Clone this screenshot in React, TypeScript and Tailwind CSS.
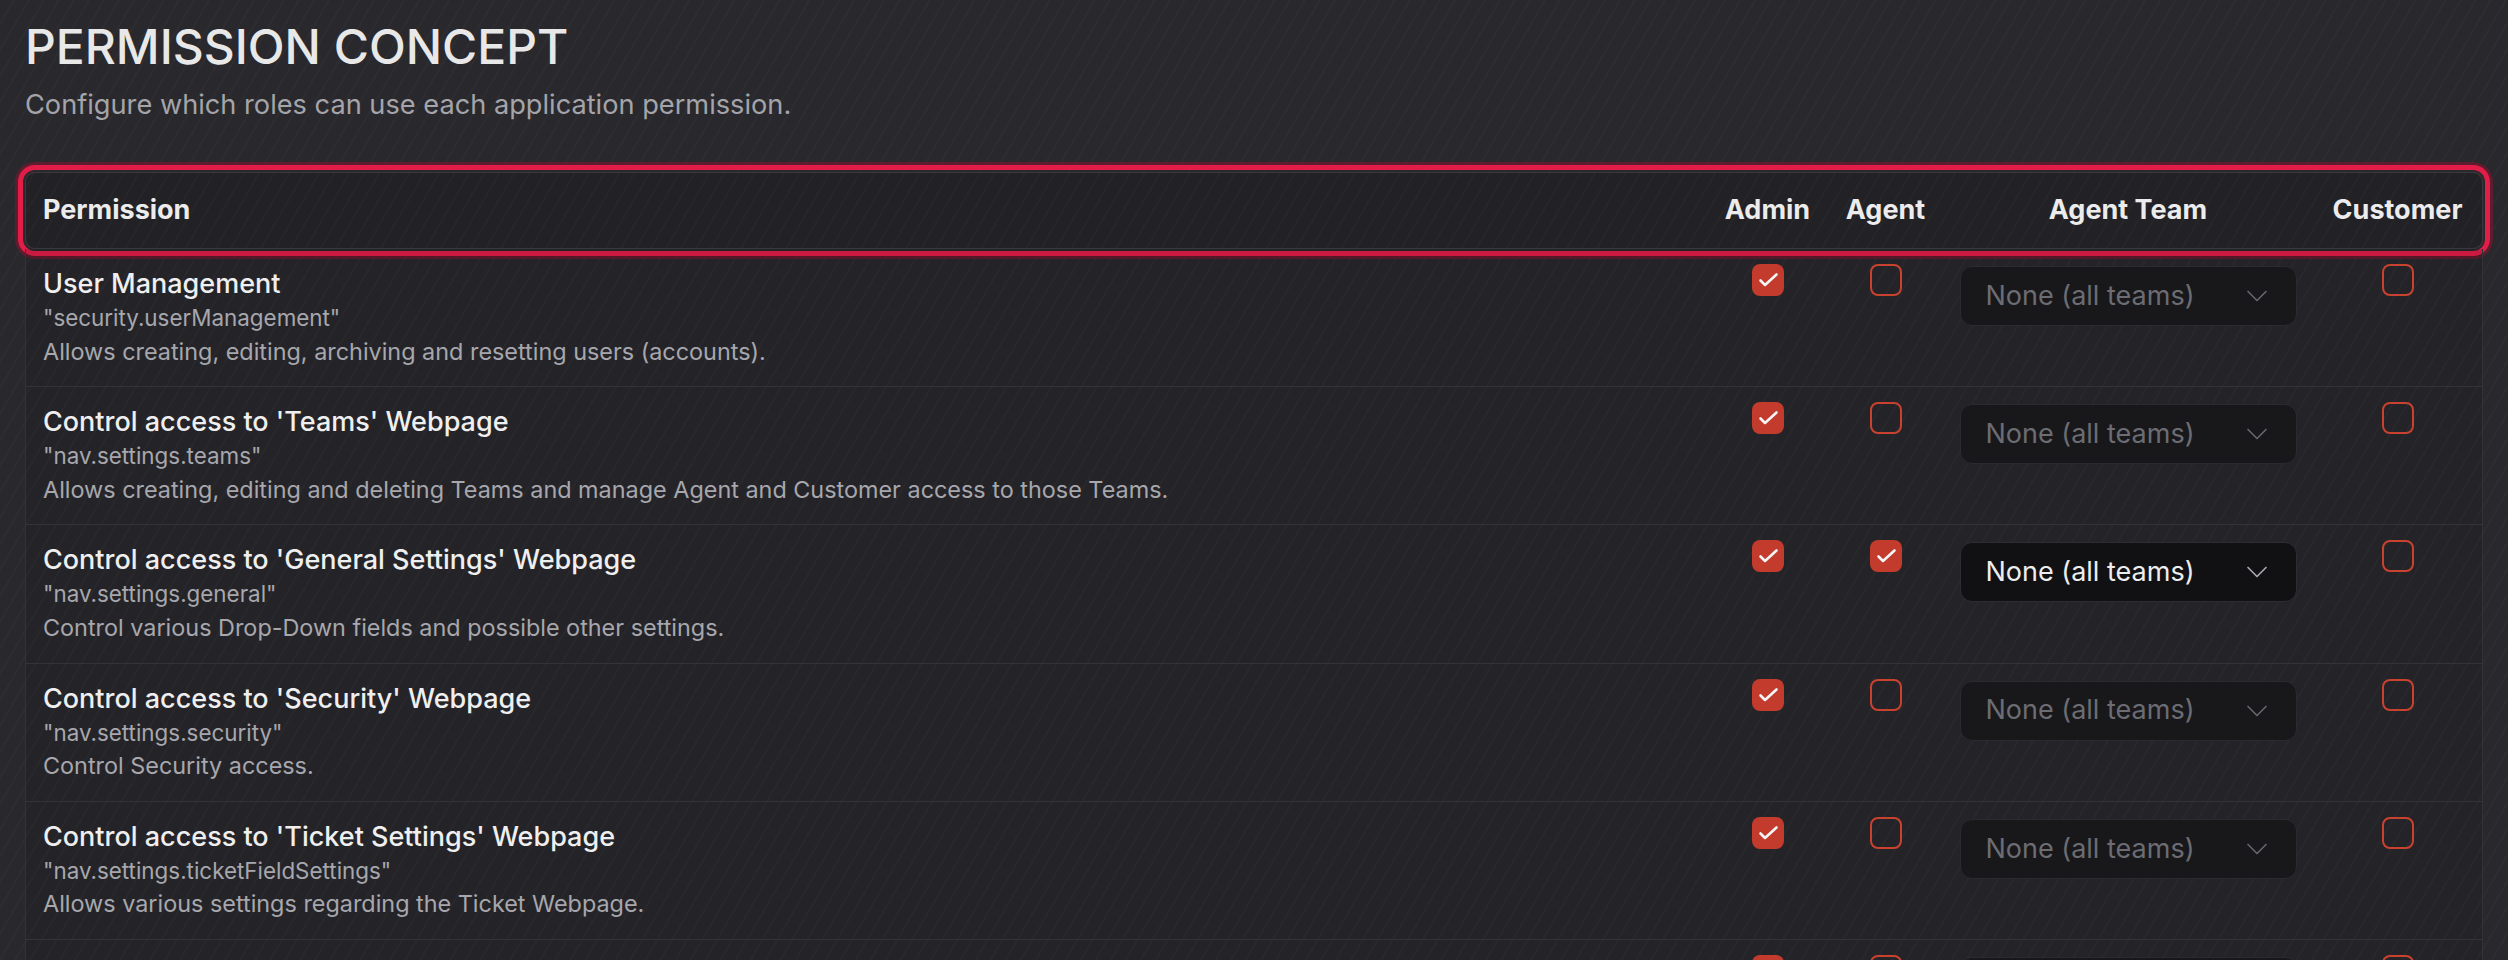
import { ChevronDown } from "lucide-react";

type Permission = {
  title: string;
  key: string;
  description: string;
  admin: boolean;
  agent: boolean;
  customer: boolean;
};

const PERMISSIONS: Permission[] = [
  {
    title: "User Management",
    key: "security.userManagement",
    description: "Allows creating, editing, archiving and resetting users (accounts).",
    admin: true,
    agent: false,
    customer: false,
  },
  {
    title: "Control access to 'Teams' Webpage",
    key: "nav.settings.teams",
    description:
      "Allows creating, editing and deleting Teams and manage Agent and Customer access to those Teams.",
    admin: true,
    agent: false,
    customer: false,
  },
  {
    title: "Control access to 'General Settings' Webpage",
    key: "nav.settings.general",
    description: "Control various Drop-Down fields and possible other settings.",
    admin: true,
    agent: true,
    customer: false,
  },
  {
    title: "Control access to 'Security' Webpage",
    key: "nav.settings.security",
    description: "Control Security access.",
    admin: true,
    agent: false,
    customer: false,
  },
  {
    title: "Control access to 'Ticket Settings' Webpage",
    key: "nav.settings.ticketFieldSettings",
    description: "Allows various settings regarding the Ticket Webpage.",
    admin: true,
    agent: false,
    customer: false,
  },
  {
    title: "Control access to 'Tickets' Webpage",
    key: "nav.tickets",
    description: "Allows viewing and working on Tickets.",
    admin: true,
    agent: false,
    customer: false,
  },
];

// shared column template for header + rows
const COLS = "grid grid-cols-[1fr_121px_115px_370px_169px]";

function RoleCheckbox({ checked }: { checked: boolean }) {
  if (!checked) {
    return <span className="-mt-[3px] block h-8 w-8 rounded-lg border-2 border-[#c9412f]" />;
  }
  return (
    <span className="-mt-[3px] flex h-8 w-8 items-center justify-center rounded-lg bg-[#c23b2c]">
      <svg width="32" height="32" viewBox="0 0 32 32" fill="none">
        <path
          d="M8.5 16.5l4.5 4.5L24.5 10.5"
          stroke="#f5f5f5"
          strokeWidth="2.6"
          strokeLinecap="round"
          strokeLinejoin="round"
        />
      </svg>
    </span>
  );
}

function TeamSelect({ enabled }: { enabled: boolean }) {
  return (
    <div
      className={
        enabled
          ? "-mt-px flex h-[60px] w-[337px] items-center justify-between rounded-xl border border-[#2d2d32] bg-[#111114] pl-[25px] pr-[21px] text-[27px] text-[#ededee]"
          : "-mt-px flex h-[60px] w-[337px] items-center justify-between rounded-xl border border-[#2a2a2f] bg-[#18181b] pl-[25px] pr-[21px] text-[27px] text-[#6c6c73]"
      }
    >
      <span>None (all teams)</span>
      <ChevronDown
        size={36}
        strokeWidth={1.1}
        className={enabled ? "text-[#a9a9b0]" : "text-[#66666e]"}
      />
    </div>
  );
}

export default function App() {
  return (
    <div className="h-screen overflow-hidden bg-[#29292d] bg-[image:repeating-linear-gradient(120deg,transparent_0px,transparent_11px,rgba(255,255,255,0.02)_11px,rgba(255,255,255,0.02)_13px)] px-[25px] pt-[18px] font-['Inter','Noto_Sans',sans-serif]">
      <h1 className="text-[48px] font-medium leading-[58px] text-[#e8e8e9]">PERMISSION CONCEPT</h1>
      <p className="mt-[10px] text-[27.2px] leading-[38px] text-[#a4a4aa]">
        Configure which roles can use each application permission.
      </p>

      <div className="mt-[48px]">
        {/* header row, highlighted with a red ring */}
        <div
          className={`${COLS} h-[77px] items-center rounded-[10px] border border-[#38383e] bg-black/15 text-[27px] font-bold text-[#ececed] shadow-[0_0_0_2px_#29292d,0_0_0_7px_#e11d48,0_0_0_10px_#5c1d2e]`}
        >
          <div className="pl-[17px]">Permission</div>
          <div className="text-center">Admin</div>
          <div className="text-center">Agent</div>
          <div className="text-center">Agent Team</div>
          <div className="text-center">Customer</div>
        </div>

        <div className="border-x border-[#323237] bg-black/10">
          {PERMISSIONS.map((p, i) => (
            <div
              key={p.key}
              className={`${COLS} pb-[18px] pt-[18px] ${i > 0 ? "border-t border-[#333338]" : ""}`}
            >
              <div className="pl-[17px]">
                <div className="text-[27px] font-medium leading-[34px] text-[#efeff0]">{p.title}</div>
                <div className="text-[22.4px] leading-[33.6px] text-[#a7a7ad]">"{p.key}"</div>
                <div className="text-[23.4px] leading-[33.6px] text-[#a7a7ad]">{p.description}</div>
              </div>
              <div className="flex justify-center">
                <RoleCheckbox checked={p.admin} />
              </div>
              <div className="flex justify-center">
                <RoleCheckbox checked={p.agent} />
              </div>
              <div className="flex justify-center">
                <TeamSelect enabled={p.agent} />
              </div>
              <div className="flex justify-center">
                <RoleCheckbox checked={p.customer} />
              </div>
            </div>
          ))}
        </div>
      </div>
    </div>
  );
}
